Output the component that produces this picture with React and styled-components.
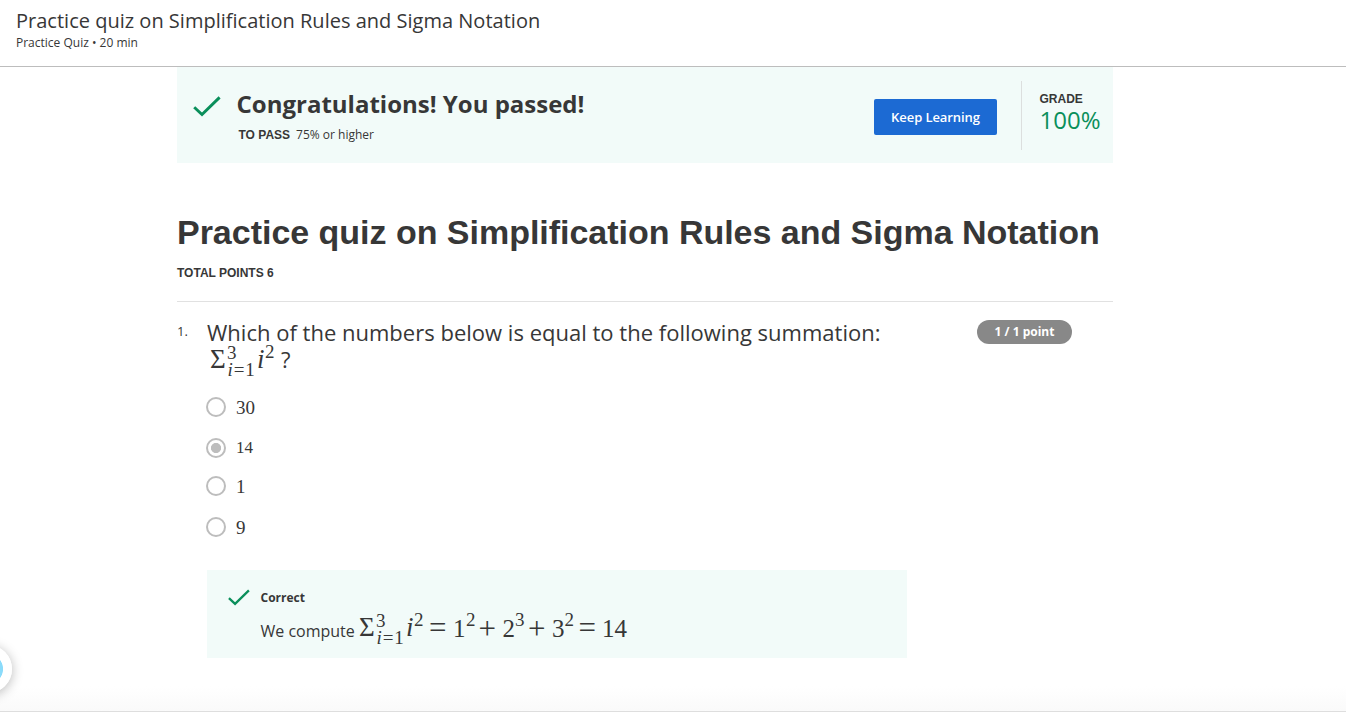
import React from 'react';
import styled, { createGlobalStyle } from 'styled-components';

const GlobalStyle = createGlobalStyle`
  *, *::before, *::after { box-sizing: border-box; }
  body { margin: 0; background: #fff; color: #373737; font-family: "Open Sans", sans-serif; }
  h1, h2, p { margin: 0; }
`;

const Page = styled.div`
  height: 712px;
  overflow: hidden;
  display: flex;
  flex-direction: column;
  position: relative;
`;

const Header = styled.header`
  flex: none;
  height: 67px;
  border-bottom: 1px solid #bdbdbd;
  padding: 7px 16px 0;
  white-space: nowrap;
`;

const HeaderTitle = styled.h2`
  font-size: 20px;
  line-height: 28px;
  font-weight: 400;
  letter-spacing: 0.01px;
`;

const HeaderMeta = styled.p`
  font-size: 12px;
  line-height: 16px;
`;

const Content = styled.main`
  flex: 1;
  width: 936px;
  margin-left: 177px;
  white-space: nowrap;
`;

const Banner = styled.section`
  height: 96px;
  background: #f2fbf9;
  display: flex;
  align-items: flex-start;
`;

const BannerCheck = styled.div`
  width: 59.5px;
  padding: 29px 0 0 16px;
`;

const BannerText = styled.div`
  flex: 1;
  padding-top: 21px;
`;

const BannerTitle = styled.h2`
  font-size: 24px;
  line-height: 32px;
  font-weight: 700;
`;

const PassLine = styled.p`
  display: flex;
  align-items: baseline;
  gap: 6px;
  padding-left: 2px;
  margin-top: 6px;
  font-size: 12px;
  line-height: 18px;
`;

const Label = styled.span`
  font-family: "Liberation Sans", Arial, sans-serif;
  font-size: 12px;
  font-weight: 700;
`;

const KeepButton = styled.button`
  width: 123px;
  height: 36px;
  margin: 32px 24px 0 0;
  padding: 0 0 1px;
  border: 0;
  border-radius: 2px;
  background: #1c6ad3;
  color: #fff;
  font: 600 13px/20px "Open Sans", sans-serif;
  letter-spacing: -0.08px;
`;

const Grade = styled.div`
  width: 92px;
  height: 69px;
  margin-top: 14px;
  padding: 10px 0 0 17.5px;
  border-left: 1px solid #dcdfde;
  display: flex;
  flex-direction: column;
  line-height: 16px;
`;

const GradeValue = styled.span`
  font-size: 24px;
  line-height: 26px;
  color: #0a8f5b;
`;

const Title = styled.h1`
  margin-top: 49px;
  font: 700 34px/40px "Liberation Sans", Arial, sans-serif;
  letter-spacing: -0.02px;
`;

const Points = styled.div`
  height: 50px;
  padding-top: 11px;
  line-height: 16px;
  border-bottom: 1px solid #e1e1e1;
`;

const Question = styled.section`
  display: flex;
  align-items: flex-start;
  padding-top: 18px;
`;

const Index = styled.span`
  width: 30px;
  padding-top: 2px;
  font-size: 13px;
  line-height: 18px;
`;

const QuestionBody = styled.div`
  width: 770px;
`;

const Prompt = styled.p`
  font-size: 22px;
  line-height: 24px;
  letter-spacing: 0.01px;
`;

const PointBadge = styled.span`
  width: 95px;
  height: 24px;
  border-radius: 12px;
  background: #888;
  color: #fff;
  font-size: 12px;
  line-height: 23px;
  font-weight: 700;
  text-align: center;
`;

const Formula = styled.div`
  display: flex;
  align-items: flex-start;
  height: ${(p) => p.$height}px;
  padding-left: ${(p) => p.$indent || 0}px;
  font-family: "Liberation Serif", "Times New Roman", serif;
`;

/* Line-height 1 puts the serif baseline 0.8375em below the box top. */
const Glyph = styled.span`
  flex: none;
  width: ${(p) => p.$w}px;
  margin-top: ${(p) => p.$base - 0.8375 * p.$size}px;
  font-size: ${(p) => p.$size}px;
  line-height: 1;
  font-style: ${(p) => (p.$italic ? 'italic' : 'normal')};
`;

const Limits = styled.span`
  flex: none;
  display: grid;
  width: 30px;
  > * { grid-area: 1 / 1; width: auto; }
`;

const Lower = styled(Glyph)`
  letter-spacing: 0.9px;
  padding-left: 0.5px;
`;

const QuestionMark = styled.span`
  margin-top: 1px;
  padding-left: 1px;
  font: 22px/28px "Open Sans", sans-serif;
`;

const Options = styled.div`
  display: flex;
  flex-direction: column;
  padding-top: 17px;
`;

const Option = styled.label`
  display: flex;
  align-items: center;
  gap: 10px;
  height: 20px;
  margin: 0 0 ${(p) => p.$gap}px -1px;
  font: ${(p) => p.$size}px/20px "Liberation Serif", "Times New Roman", serif;
`;

const OptionText = styled.span`
  padding-top: ${(p) => p.$drop}px;
`;

const Radio = styled.span`
  width: 20px;
  height: 20px;
  border: 2px solid #bdbdbd;
  border-radius: 50%;
  background: ${(p) => (p.$checked ? 'radial-gradient(circle, #bdbdbd 4.7px, #fff 5.4px)' : '#fff')};
`;

const Feedback = styled.div`
  width: 700px;
  height: 88px;
  margin-top: 33px;
  background: #f2fbf9;
  display: flex;
`;

const FeedbackCheck = styled.div`
  width: 53.5px;
  padding: 19px 0 0 21px;
`;

const FeedbackTitle = styled.p`
  padding-top: 19px;
  font-size: 12px;
  line-height: 17px;
  font-weight: 700;
`;

const Answer = styled.div`
  display: flex;
`;

const AnswerLead = styled.span`
  width: 98.5px;
  padding-top: 13px;
  font-size: 16px;
  line-height: 24px;
`;

const Bubble = styled.div`
  position: absolute;
  left: -36px;
  top: 645px;
  width: 48px;
  height: 48px;
  border-radius: 50%;
  background: radial-gradient(circle, #8bdbfa 14.6px, #fff 15.4px);
  box-shadow: 0 2px 12px rgba(0, 0, 0, 0.28);
`;

const Footer = styled.footer`
  position: absolute;
  left: 0;
  right: 0;
  bottom: 0;
  height: 26px;
  border-bottom: 1px solid #dedede;
  background: linear-gradient(rgba(250, 250, 250, 0), #fafafa);
`;

const CheckSvg = styled.svg`
  display: block;
`;

const Check = ({ width, height }) => (
  <CheckSvg width={width} height={height} viewBox="0 0 28 21" fill="none">
    <path d="M1.2 11.2 9 18.6 26.6 1.4" stroke="#0a8f5b" strokeWidth="2.9" />
  </CheckSvg>
);

const Summation = ({ base }) => (
  <>
    <Glyph $size={27} $w={17} $base={base}>Σ</Glyph>
    <Limits>
      <Glyph $size={19} $base={base - 10}>3</Glyph>
      <Lower $size={19} $base={base + 7}><i>i</i>=1</Lower>
    </Limits>
    <Glyph $size={27} $w={8} $base={base} $italic>i</Glyph>
    <Glyph $size={19} $w={15} $base={base - 11}>2</Glyph>
  </>
);

const answers = [
  { value: '30', size: 19, gap: 21, drop: 2 },
  { value: '14', size: 17, gap: 18, drop: 0 },
  { value: '1', size: 19, gap: 21, drop: 2 },
  { value: '9', size: 19, gap: 0, drop: 2 },
];

const terms = [
  { text: '=', size: 31, width: 24, rise: -1 },
  { text: '1', size: 25, width: 13, rise: 0 },
  { text: '2', size: 19, width: 12.5, rise: 11 },
  { text: '+', size: 31, width: 24, rise: -2 },
  { text: '2', size: 25, width: 12.5, rise: 0 },
  { text: '3', size: 19, width: 13, rise: 11 },
  { text: '+', size: 31, width: 24, rise: -2 },
  { text: '3', size: 25, width: 12.5, rise: 0 },
  { text: '2', size: 19, width: 14, rise: 11 },
  { text: '=', size: 31, width: 23.5, rise: -1 },
  { text: '14', size: 25, width: 26, rise: 0 },
];

export default function App() {
  return (
    <Page>
      <GlobalStyle />
      <Header>
        <HeaderTitle>Practice quiz on Simplification Rules and Sigma Notation</HeaderTitle>
        <HeaderMeta>Practice Quiz • 20 min</HeaderMeta>
      </Header>
      <Content>
        <Banner>
          <BannerCheck><Check width={28} height={21} /></BannerCheck>
          <BannerText>
            <BannerTitle>Congratulations! You passed!</BannerTitle>
            <PassLine><Label>TO PASS</Label>75% or higher</PassLine>
          </BannerText>
          <KeepButton>Keep Learning</KeepButton>
          <Grade>
            <Label>GRADE</Label>
            <GradeValue>100%</GradeValue>
          </Grade>
        </Banner>
        <Title>Practice quiz on Simplification Rules and Sigma Notation</Title>
        <Points><Label>TOTAL POINTS 6</Label></Points>
        <Question>
          <Index>1.</Index>
          <QuestionBody>
            <Prompt>Which of the numbers below is equal to the following summation:</Prompt>
            <Formula $height={36} $indent={3}>
              <Summation base={25} />
              <QuestionMark>?</QuestionMark>
            </Formula>
            <Options>
              {answers.map((a) => (
                <Option key={a.value} $size={a.size} $gap={a.gap}>
                  <Radio $checked={a.value === '14'} />
                  <OptionText $drop={a.drop}>{a.value}</OptionText>
                </Option>
              ))}
            </Options>
            <Feedback>
              <FeedbackCheck><Check width={22} height={17} /></FeedbackCheck>
              <div>
                <FeedbackTitle>Correct</FeedbackTitle>
                <Answer>
                  <AnswerLead>We compute</AnswerLead>
                  <Formula $height={52}>
                    <Summation base={31} />
                    {terms.map((t, i) => (
                      <Glyph key={i} $size={t.size} $w={t.width} $base={31 - t.rise}>{t.text}</Glyph>
                    ))}
                  </Formula>
                </Answer>
              </div>
            </Feedback>
          </QuestionBody>
          <PointBadge>1 / 1 point</PointBadge>
        </Question>
      </Content>
      <Footer />
      <Bubble />
    </Page>
  );
}
